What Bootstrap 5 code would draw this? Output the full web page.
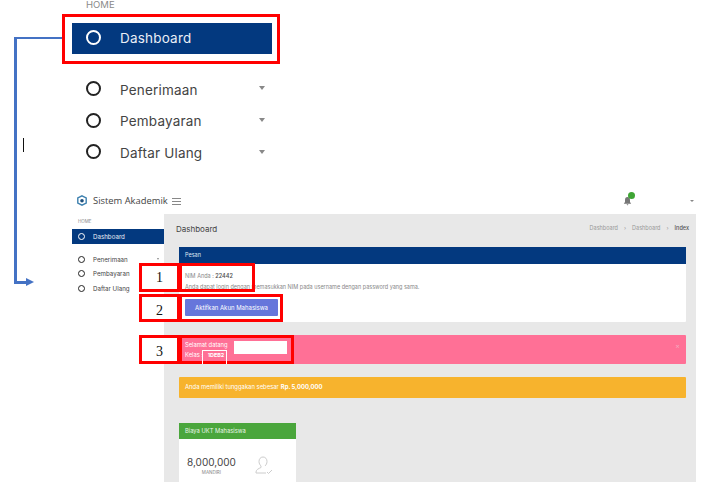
<!doctype html>
<html lang="id"><head><meta charset="utf-8"><title>Sistem Akademik</title>
<link href="https://cdn.jsdelivr.net/npm/bootstrap@5.3.0/dist/css/bootstrap.min.css" rel="stylesheet">
<style>
html,body{height:493px;overflow:hidden;background:#fff}
body{font-family:Inter,"Liberation Sans",sans-serif;color:#444;position:relative}
.doc{width:710px;height:493px;position:relative;overflow:hidden}
.topcrop{margin-left:72px;width:200px;height:185px}
.home-big{font-size:9.5px;line-height:10px;color:#8a8a8a;padding-left:14px;height:23px}
.big-item{display:flex;align-items:center;font-size:13.5px;color:#444;padding-left:14px;padding-right:7px}
.big-item .ring{width:15px;height:15px;border:2.5px solid #222;border-radius:50%;margin-right:19px;flex:none}
.big-item .lbl{flex:1;letter-spacing:.2px}
.big-item.on{background:#03397f;color:#e9eef6;height:31px}
.big-item.on .ring{border-color:#fff;margin-top:-2px}
.big-list{margin-top:20px}
.big-list .big-item{height:31.7px}
.big-list .ring{margin-top:-3px}
.car{width:0;height:0;border:3.5px solid transparent;border-top:4px solid #888;border-bottom:0;margin-top:-3px}
.app{margin-left:72px;width:624px;height:297px;overflow:hidden}
.apptop{height:29px;display:flex;align-items:center;background:#fff;padding-top:3px}
.brandbox{width:92px;display:flex;align-items:center;white-space:nowrap;font-family:"Open Sans","Liberation Sans",sans-serif;font-size:9.4px;color:#444;flex:none;padding-left:5px;gap:6px}
.brandbox svg{flex:none}
.burger{width:9px;height:7px;border-top:1px solid #888;border-bottom:1px solid #888;position:relative;margin-left:8px}
.burger::after{content:"";position:absolute;left:0;right:0;top:2px;border-top:1px solid #888}
.bellwrap{margin-left:auto;position:relative;margin-right:58px;line-height:0}
.bellbadge{position:absolute;width:7px;height:7px;border-radius:50%;background:#3fa535;right:-3px;top:-4px}
.topcar{width:0;height:0;border:2px solid transparent;border-top:2px solid #888;border-bottom:0;margin-right:2px}
.appbody{display:flex;height:268px}
.appside{width:92px;flex:none;background:#fff;font-size:6.2px;color:#444}
.sm-home{font-size:4.5px;color:#888;padding:4px 0 0 6px;height:15px;line-height:8px}
.sm-item{display:flex;align-items:center;padding-left:6px;padding-right:5px}
.sm-item.on{background:#03397f;color:#e9eef6;height:15px}
.sm-ring{width:7px;height:7px;border:1.4px solid #222;border-radius:50%;margin-right:8px;flex:none}
.sm-item.on .sm-ring{border-color:#fff}
.sm-list{margin-top:8px}
.sm-list .sm-item{height:14.5px}
.sm-car{width:0;height:0;border:1.5px solid transparent;border-top:2px solid #888;border-bottom:0}
.appmain{flex:1;background:#e8e8e8;padding:0 10px 0 15px;min-width:0}
.crumbs{display:flex;align-items:center;justify-content:space-between;height:33px;padding-bottom:4px;margin-left:-3px}
.ttl{font-size:8px;color:#444}
.crumb-t{font-size:5.5px;color:#999;margin-right:-3px;display:flex;gap:6px}
.crumb-t b{font-weight:500;color:#555}
.pesan{background:#fff;height:75px;font-size:5.5px;color:#888;border-radius:1px}
.pesan-h{background:#03397f;color:#dfe7f2;height:17px;padding:0 6px;display:flex;align-items:center;font-size:5.5px}
.pesan-b{padding:7px 6px}
.pesan-b p{margin:0;line-height:11px}
.pesan-b strong{color:#555;font-weight:600}
.btn-akt{background:#6676db;color:#fff;border:0;border-radius:1px;font-size:6px;width:93px;height:17px;padding:0;margin-top:6px;display:block}
.pinkbar{background:#ff7096;color:#fff;height:29px;margin-top:13px;padding:5px 6px;font-size:5.8px;line-height:9.5px;position:relative;border-radius:1px}
.pinkbar .x{position:absolute;right:6px;top:7px;color:#f4a9be;font-size:7px;line-height:8px}
.pinkbar b{margin-left:3px;font-size:5.4px}
.orangebar{background:#f7b32d;color:#fff;height:21px;margin-top:13px;padding:0 6px;display:flex;align-items:center;font-size:5.9px;border-radius:1px}
.orangebar b{margin-left:2px}
.ukt{width:117px;margin-top:25px;background:#fff;border-radius:1px;height:80px}
.ukt-h{background:#4aa63c;color:#e9f5e7;height:16px;padding:0 6px;display:flex;align-items:center;font-size:5.8px}
.ukt-b{display:flex;gap:19px;padding:17px 0 0 8px;color:#444}
.ukt-n{font-size:10px;line-height:12px}
.ukt-m{font-size:4.5px;text-align:center;color:#888;margin-top:2px}
.redbox{position:absolute;border:3px solid #f00}
.numbox{position:absolute;background:#fff;border:3px solid #f00;font-family:"Liberation Serif",serif;color:#111;font-size:14px;display:flex;align-items:center;justify-content:center}
.whitepatch{position:absolute;background:#fff}
.pipe{position:absolute;background:#4472c4}
.cursorbar{position:absolute;left:23px;top:138px;width:1px;height:14px;background:#111}
.arrowtip{position:absolute;left:26px;top:278px;width:0;height:0;border-left:8px solid #4472c4;border-top:4px solid transparent;border-bottom:4px solid transparent}
</style></head><body>
<div class="doc">
  <div class="topcrop">
    <div class="home-big">HOME</div>
    <div class="big-item on"><span class="ring"></span><span class="lbl">Dashboard</span></div>
    <div class="big-list">
      <div class="big-item"><span class="ring"></span><span class="lbl">Penerimaan</span><span class="car"></span></div>
      <div class="big-item"><span class="ring"></span><span class="lbl">Pembayaran</span><span class="car"></span></div>
      <div class="big-item"><span class="ring"></span><span class="lbl">Daftar Ulang</span><span class="car"></span></div>
    </div>
  </div>
  <div class="app">
    <div class="apptop">
      <div class="brandbox">
        <svg width="10" height="11" viewBox="0 0 10 11"><path d="M5 .8 9.200 3v5L5 10.200.8 8V3z" fill="none" stroke="#3b7fae" stroke-width="1.4"/><circle cx="5" cy="5.800" r="1.800" fill="#1d4f7c"/></svg>
        <span>Sistem Akademik</span>
      </div>
      <span class="burger"></span>
      <span class="bellwrap"><svg width="9" height="10" viewBox="0 0 9 10"><path d="M4.500 1C2.800 1 2 2.300 2 4v2L.8 7.800h7.400L7 6V4C7 2.300 6.200 1 4.500 1zM3.500 8.300h2L4.500 9.500z" fill="#777"/></svg><span class="bellbadge"></span></span>
      <span class="topcar"></span>
    </div>
    <div class="appbody">
      <aside class="appside">
        <div class="sm-home">HOME</div>
        <div class="sm-item on"><span class="sm-ring"></span>Dashboard</div>
        <div class="sm-list">
          <div class="sm-item"><span class="sm-ring"></span><span class="flex-grow-1">Penerimaan</span><span class="sm-car"></span></div>
          <div class="sm-item"><span class="sm-ring"></span><span class="flex-grow-1">Pembayaran</span><span class="sm-car"></span></div>
          <div class="sm-item"><span class="sm-ring"></span><span class="flex-grow-1">Daftar Ulang</span><span class="sm-car"></span></div>
        </div>
      </aside>
      <main class="appmain">
        <div class="crumbs"><span class="ttl">Dashboard</span>
          <span class="crumb-t"><span>Dashboard</span><span>›</span><span>Dashboard</span><span>›</span><b>Index</b></span></div>
        <div class="pesan">
          <div class="pesan-h">Pesan</div>
          <div class="pesan-b">
            <p>NIM Anda : <strong>22442</strong></p>
            <p>Anda dapat login dengan memasukkan NIM pada username dengan password yang sama.</p>
            <button class="btn-akt" type="button">Aktifkan Akun Mahasiswa</button>
          </div>
        </div>
        <div class="pinkbar">Selamat datang<br>Kelas : <b>1DEB2</b><span class="x">×</span></div>
        <div class="orangebar">Anda memiliki tunggakan sebesar <b>Rp. 5,000,000</b></div>
        <div class="ukt">
          <div class="ukt-h">Biaya UKT Mahasiswa</div>
          <div class="ukt-b">
            <div><div class="ukt-n">8,000,000</div><div class="ukt-m">MANDIRI</div></div>
            <svg width="18" height="18" viewBox="0 0 18 18" fill="none" stroke="#ccc"><path d="M8 1C5.500 1 4 3 4 5.500 4 7.500 5 9 6 10v1.500C4 12.500 1 13.500 1 16v1h10M10 10c1-1 2-2.500 2-4.500C12 3 10.500 1 8 1M12 16l1.500 1.500L17 14"/></svg>
          </div>
        </div>
      </main>
    </div>
  </div>

  <!-- annotations drawn on top of the screenshot -->
  <div class="pipe" style="left:15px;top:37px;width:47px;height:2px"></div>
  <div class="pipe" style="left:14px;top:37px;width:3px;height:246px"></div>
  <div class="pipe" style="left:14px;top:281px;width:13px;height:3px"></div>
  <div class="arrowtip"></div>
  <div class="cursorbar"></div>
  <div class="redbox" style="left:62px;top:14px;width:218px;height:50px"></div>
  <div class="numbox" style="left:139px;top:263px;width:41px;height:29px">1</div>
  <div class="redbox" style="left:179px;top:263px;width:76px;height:29px"></div>
  <div class="numbox pt-1" style="left:139px;top:294px;width:41px;height:28px">2</div>
  <div class="redbox" style="left:179px;top:294px;width:104px;height:28px"></div>
  <div class="numbox pt-1" style="left:139px;top:335px;width:41px;height:29px">3</div>
  <div class="redbox" style="left:179px;top:335px;width:115px;height:29px"></div>
  <div class="whitepatch" style="left:234px;top:341px;width:53px;height:13px"></div>
  <div class="whitepatch" style="left:202px;top:350px;width:25px;height:1px"></div>
  <div class="whitepatch" style="left:202px;top:350px;width:1px;height:14px"></div>
  <div class="whitepatch" style="left:226px;top:350px;width:1px;height:14px"></div>
</div>
<script src="https://cdn.jsdelivr.net/npm/bootstrap@5.3.0/dist/js/bootstrap.bundle.min.js"></script>
</body></html>
